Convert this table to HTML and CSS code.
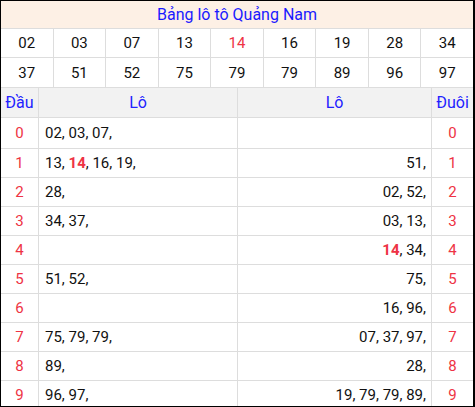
FILE: index.html
```html
<!DOCTYPE html>
<html lang="vi">
<head>
<meta charset="utf-8">
<title>Bảng lô tô Quảng Nam</title>
<link rel="stylesheet" href="styles.css">
</head>
<body>
<div class="board">
  <div class="title">Bảng lô tô Quảng Nam</div>
  <div class="nums">
    <div class="n">02</div><div class="n">03</div><div class="n">07</div><div class="n">13</div><div class="n red">14</div><div class="n">16</div><div class="n">19</div><div class="n">28</div><div class="n">34</div>
    <div class="n">37</div><div class="n">51</div><div class="n">52</div><div class="n">75</div><div class="n">79</div><div class="n">79</div><div class="n">89</div><div class="n">96</div><div class="n">97</div>
  </div>
  <div class="lt">
    <div class="h">Đầu</div><div class="h">Lô</div><div class="h">Lô</div><div class="h">Đuôi</div>

    <div class="d">0</div><div class="l"><span>02, 03, 07,</span></div><div class="r"></div><div class="d">0</div>
    <div class="d">1</div><div class="l"><span>13, <b>14</b>, 16, 19,</span></div><div class="r"><span>51,</span></div><div class="d">1</div>
    <div class="d">2</div><div class="l"><span>28,</span></div><div class="r"><span>02, 52,</span></div><div class="d">2</div>
    <div class="d">3</div><div class="l"><span>34, 37,</span></div><div class="r"><span>03, 13,</span></div><div class="d">3</div>
    <div class="d">4</div><div class="l"></div><div class="r"><span><b>14</b>, 34,</span></div><div class="d">4</div>
    <div class="d">5</div><div class="l"><span>51, 52,</span></div><div class="r"><span>75,</span></div><div class="d">5</div>
    <div class="d">6</div><div class="l"></div><div class="r"><span>16, 96,</span></div><div class="d">6</div>
    <div class="d">7</div><div class="l"><span>75, 79, 79,</span></div><div class="r"><span>07, 37, 97,</span></div><div class="d">7</div>
    <div class="d">8</div><div class="l"><span>89,</span></div><div class="r"><span>28,</span></div><div class="d">8</div>
    <div class="d">9</div><div class="l"><span>96, 97,</span></div><div class="r"><span>19, 79, 79, 89,</span></div><div class="d">9</div>
  </div>
</div>
</body>
</html>
```
FILE: styles.css
```css
html, body {
  margin: 0;
  padding: 0;
  background: #fff;
}
body {
  font-family: Roboto, "Liberation Sans", Arial, sans-serif;
  font-size: 15px;
  color: #111;
}
.board {
  box-sizing: border-box;
  width: 475px;
  height: 407px;
  overflow: hidden;
  border: 1px solid #000;
  border-right-width: 2px;
  background: #dddddd;
  display: flex;
  flex-direction: column;
  gap: 1px;
}
.title {
  flex: none;
  height: 27px;
  background: #fdf0e5;
  color: #1a1aff;
  font-size: 16px;
  display: flex;
  align-items: center;
  justify-content: center;
}
.nums {
  flex: none;
  display: grid;
  grid-template-columns: repeat(9, 1fr);
  grid-template-rows: 28px 29px;
  gap: 1px;
}
.n {
  background: #fff;
  display: flex;
  align-items: center;
  justify-content: center;
}
.red { color: #ee3344; }
.lt {
  flex: none;
  display: grid;
  grid-template-columns: 37px 198px 193px 1fr;
  grid-template-rows: 29px 30px repeat(9, 28px);
  gap: 1px;
}
.lt > div {
  display: flex;
  align-items: center;
  background: #fff;
  white-space: nowrap;
}
.lt > .h {
  background: #f2f2f2;
  color: #2222ff;
  font-size: 16px;
  justify-content: center;
}
.lt > .d {
  color: #ee3344;
  justify-content: center;
}
.lt > .l {
  padding-left: 6px;
}
.lt > .r {
  justify-content: flex-end;
  padding-right: 5px;
}
b {
  color: #ee3344;
  font-weight: 700;
}
```
